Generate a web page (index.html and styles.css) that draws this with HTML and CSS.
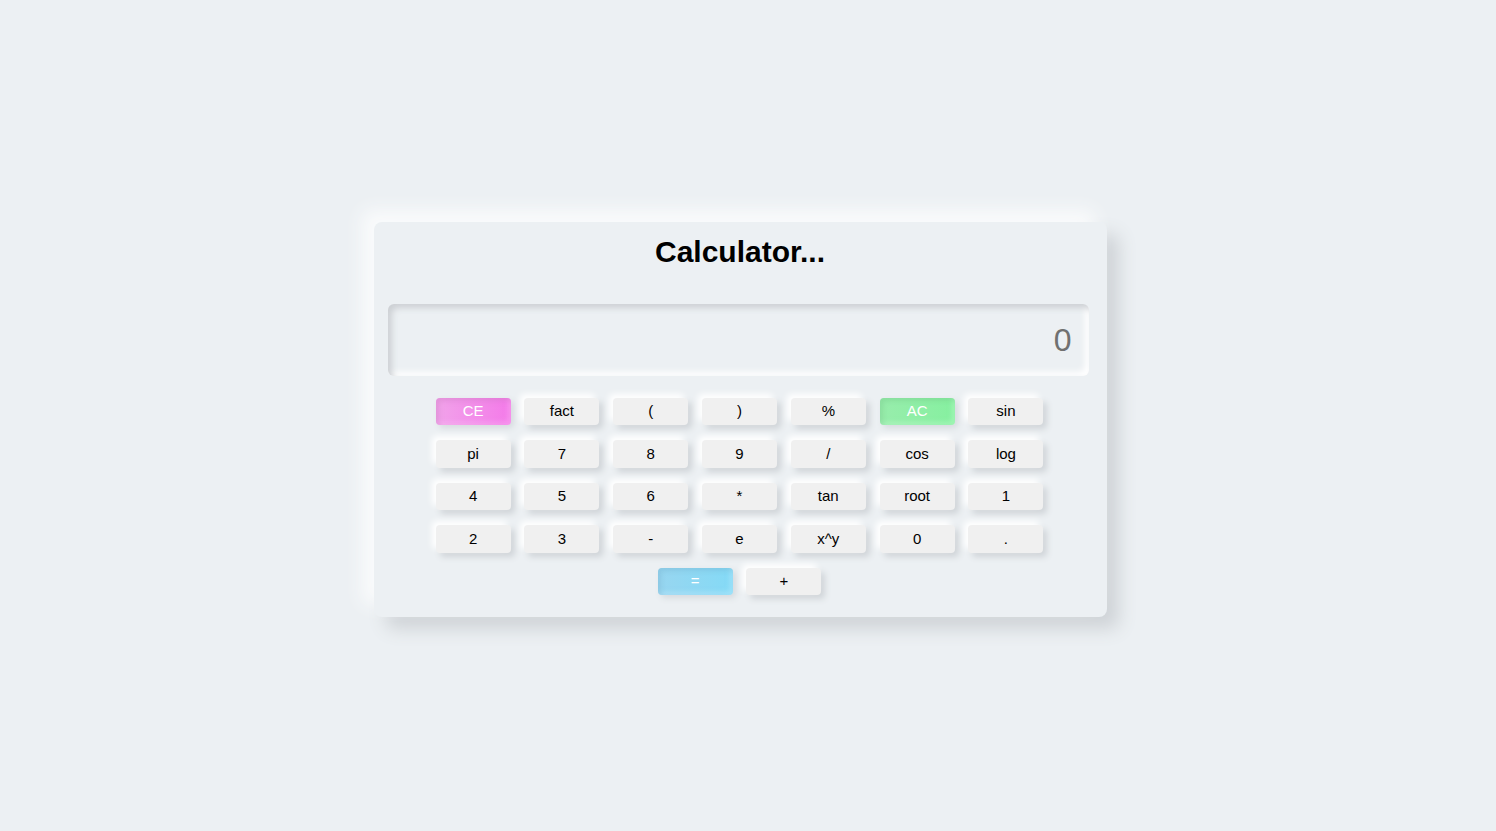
FILE: index.html
```html
<!DOCTYPE html>
<html>
<head>
<meta charset="utf-8">
<link rel="stylesheet" href="styles.css">
</head>
<body>
<div class="page">
  <div class="calc">
    <h1 class="title">Calculator...</h1>
    <div class="display">0</div>
    <div class="keys">
      <button class="key key-ce">CE</button>
      <button class="key">fact</button>
      <button class="key">(</button>
      <button class="key">)</button>
      <button class="key">%</button>
      <button class="key key-ac">AC</button>
      <button class="key">sin</button>
      <button class="key">pi</button>
      <button class="key">7</button>
      <button class="key">8</button>
      <button class="key">9</button>
      <button class="key">/</button>
      <button class="key">cos</button>
      <button class="key">log</button>
      <button class="key">4</button>
      <button class="key">5</button>
      <button class="key">6</button>
      <button class="key">*</button>
      <button class="key">tan</button>
      <button class="key">root</button>
      <button class="key">1</button>
      <button class="key">2</button>
      <button class="key">3</button>
      <button class="key">-</button>
      <button class="key">e</button>
      <button class="key">x^y</button>
      <button class="key">0</button>
      <button class="key">.</button>
      <button class="key key-eq">=</button>
      <button class="key">+</button>
    </div>
  </div>
</div>
</body>
</html>
```
FILE: styles.css
```css
html, body {
  margin: 0;
  padding: 0;
  background: #ecf0f3;
  font-family: "Liberation Sans", Arial, sans-serif;
}
.page {
  height: 831px;
  display: flex;
  justify-content: center;
  padding-top: 222px;
  padding-right: 16px;
  box-sizing: border-box;
}
.calc {
  width: 733px;
  height: 395px;
  box-sizing: border-box;
  background: #ecf0f3;
  border-radius: 8px;
  padding: 13px 18px 0 14px;
  box-shadow: -12px -12px 18px #fafbfc, 12px 12px 18px #cfd3d7;
}
.title {
  margin: 0;
  text-align: center;
  font-size: 30px;
  font-weight: bold;
  line-height: 34px;
  color: #000;
  padding-left: 4px;
}
.display {
  margin-top: 35px;
  height: 72px;
  box-sizing: border-box;
  border-radius: 6px;
  background: #ecf0f3;
  box-shadow: inset 4px 4px 6px #cdd0d4, inset -4px -4px 6px #ffffff;
  text-align: right;
  font-size: 32px;
  line-height: 72px;
  color: #707070;
  padding-right: 17px;
}
.keys {
  width: 610px;
  margin: 22px auto 0;
  display: flex;
  flex-wrap: wrap;
  justify-content: center;
  column-gap: 13.8px;
  row-gap: 15.2px;
  padding-left: 3px;
}
.key {
  width: 75px;
  height: 27.3px;
  border: none;
  border-radius: 4px;
  background: #f0f0f0;
  font-family: "Liberation Sans", Arial, sans-serif;
  font-size: 15px;
  color: #000;
  padding: 0 0 2px;
  box-shadow: -4px -4px 6px #ffffff, 4px 4px 6px #d0d4d8;
}
.key-ce {
  color: #fff;
  background: linear-gradient(90deg, #f1a3ea, #f47ae9);
  box-shadow: inset 3px 3px 5px rgba(200, 120, 190, 0.35), inset -3px -3px 5px rgba(255, 200, 250, 0.35), 3px 3px 6px #d6dade;
}
.key-ac {
  color: #fff;
  background: linear-gradient(90deg, #98edac, #86f0a0);
  box-shadow: inset 3px 3px 5px rgba(110, 190, 130, 0.3), inset -3px -3px 5px rgba(210, 255, 220, 0.35), 3px 3px 6px #d6dade;
}
.key-eq {
  color: #fff;
  background: linear-gradient(90deg, #98d6f0, #84daf6);
  box-shadow: inset 3px 3px 5px rgba(110, 170, 200, 0.3), inset -3px -3px 5px rgba(210, 240, 255, 0.35), 3px 3px 6px #d6dade;
}
```
